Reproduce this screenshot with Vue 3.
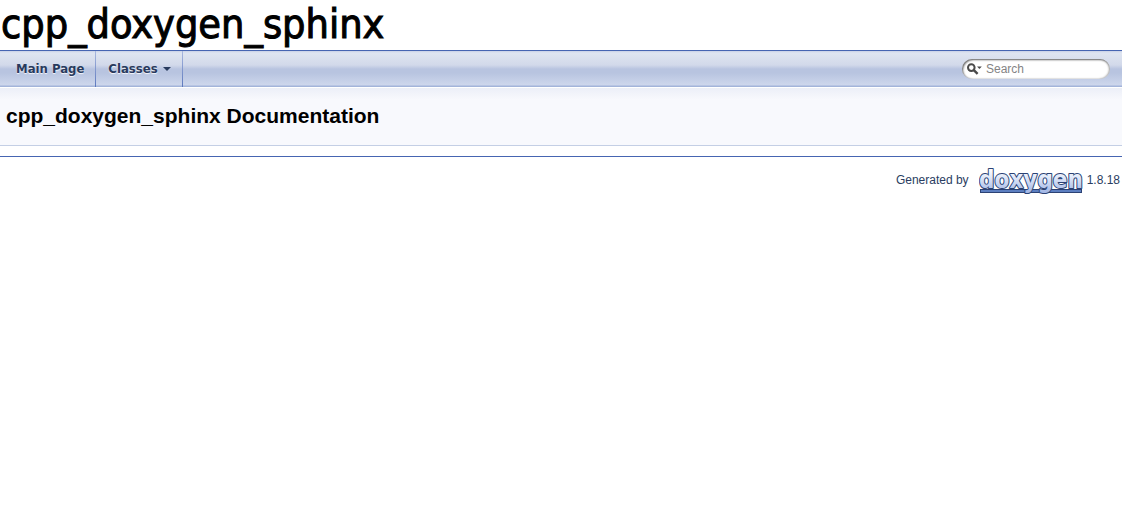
<script setup>
import { ref } from 'vue'

const query = ref('')
</script>

<template>
  <div class="page">
    <header class="title-area">
      <div class="project-name">cpp_doxygen_sphinx</div>
    </header>
    <nav class="main-nav">
      <ul class="menu">
        <li><a href="#">Main Page</a></li>
        <li>
          <a href="#">Classes<span class="arrow"></span></a>
        </li>
      </ul>
      <label class="search">
        <svg class="magnifier" width="16" height="12" viewBox="0 0 16 12" aria-hidden="true">
          <circle cx="4.3" cy="4.6" r="3.3" fill="none" stroke="#4a4a4a" stroke-width="2" />
          <path d="M6.8 7.1L10.6 10.9" stroke="#4a4a4a" stroke-width="2.4" />
          <path d="M10 3.4H14.8L12.4 6Z" fill="#4a4a4a" />
        </svg>
        <input v-model="query" type="text" placeholder="Search" aria-label="Search" />
      </label>
    </nav>
    <main>
      <div class="header">
        <h1>cpp_doxygen_sphinx Documentation</h1>
      </div>
    </main>
    <footer>
      <span>Generated by</span>
      <a class="logo" href="#" aria-label="doxygen">
        <svg width="104" height="28" viewBox="0 0 104 28">
          <defs>
            <linearGradient id="letters" gradientUnits="userSpaceOnUse" x1="0" y1="3" x2="0" y2="26">
              <stop offset="0" stop-color="#ffffff" />
              <stop offset="0.35" stop-color="#e2e9f9" />
              <stop offset="1" stop-color="#a4b8e6" />
            </linearGradient>
          </defs>
          <rect x="1.5" y="23.5" width="101" height="3" fill="#5c7ec0" stroke="#2c4274" />
          <text class="wordmark" x="52" y="22" text-anchor="middle">doxygen</text>
        </svg>
      </a>
      <span>1.8.18</span>
    </footer>
  </div>
</template>

<style>
body {
  margin: 0;
  background: #fff;
}
</style>

<style scoped>
.page {
  font-family: "Liberation Sans", Arial, sans-serif;
  color: #000;
}
.title-area {
  height: 50px;
  border-bottom: 1px solid #4665b2;
}
.project-name {
  padding-left: 1px;
  font: 41px/48px Tahoma, "DejaVu Sans Condensed", sans-serif;
  -webkit-text-stroke: 1px #000;
  white-space: nowrap;
}
.main-nav {
  display: flex;
  align-items: center;
  justify-content: space-between;
  height: 36px;
  padding-right: 12px;
  background: linear-gradient(#c9d1e6 0, #dfe5f1 2px, #d2d9ea 14px, #b8c4e0 18px, #b8c4e0 22px, #cdd6ec 34px, #a3b4da 35px, #a3b4da 36px);
}
.menu {
  display: flex;
  align-self: stretch;
  margin: 0;
  padding: 0 0 0 4px;
  list-style: none;
}
.menu a {
  display: flex;
  align-items: center;
  height: 36px;
  padding: 0 12px;
  background: linear-gradient(#a9b8df, #5c78bd) right / 1px 100% no-repeat;
  font: bold 13px/36px "Lucida Grande", "DejaVu Sans Condensed", sans-serif;
  color: #283a5d;
  text-decoration: none;
  text-shadow: 0 1px 1px rgba(255, 255, 255, 0.9);
}
.arrow {
  margin-left: 5px;
  border: 4px solid transparent;
  border-top-color: #283a5d;
  border-bottom: 0;
}
.search {
  display: flex;
  align-items: center;
  box-sizing: border-box;
  width: 148px;
  height: 20px;
  padding: 0 8px 0 5px;
  border-radius: 10px;
  background: #fff;
  box-shadow: inset 1px 1px 2px #666, inset -1px 0 2px #aaa;
}
.magnifier {
  flex: none;
}
.search input {
  min-width: 0;
  width: 100%;
  margin-left: 3px;
  padding: 0;
  border: 0;
  outline: 0;
  background: transparent;
  font: 12px/16px "Liberation Sans", Arial, sans-serif;
  color: #555;
}
.search input::placeholder {
  color: #848484;
}
.header {
  margin-bottom: 10px;
  padding: 15px 6px 17px;
  border-top: 1px solid #fff;
  border-bottom: 1px solid #c4cfe5;
  background: linear-gradient(#eceff8, #f8f9fd 12px);
}
h1 {
  margin: 0;
  font-size: 21px;
  line-height: 25px;
}
footer {
  display: flex;
  justify-content: flex-end;
  align-items: center;
  padding: 9px 2px 0 0;
  border-top: 1px solid #4665b2;
  font-size: 12px;
  line-height: 28px;
  color: #2a3d61;
}
.logo {
  display: flex;
  margin: 0 4px 0 10px;
}
.wordmark {
  font: bold 24px "DejaVu Sans Condensed", sans-serif;
  fill: url(#letters);
  stroke: #2c4274;
  stroke-width: 2px;
  stroke-linejoin: round;
  paint-order: stroke;
}
</style>
